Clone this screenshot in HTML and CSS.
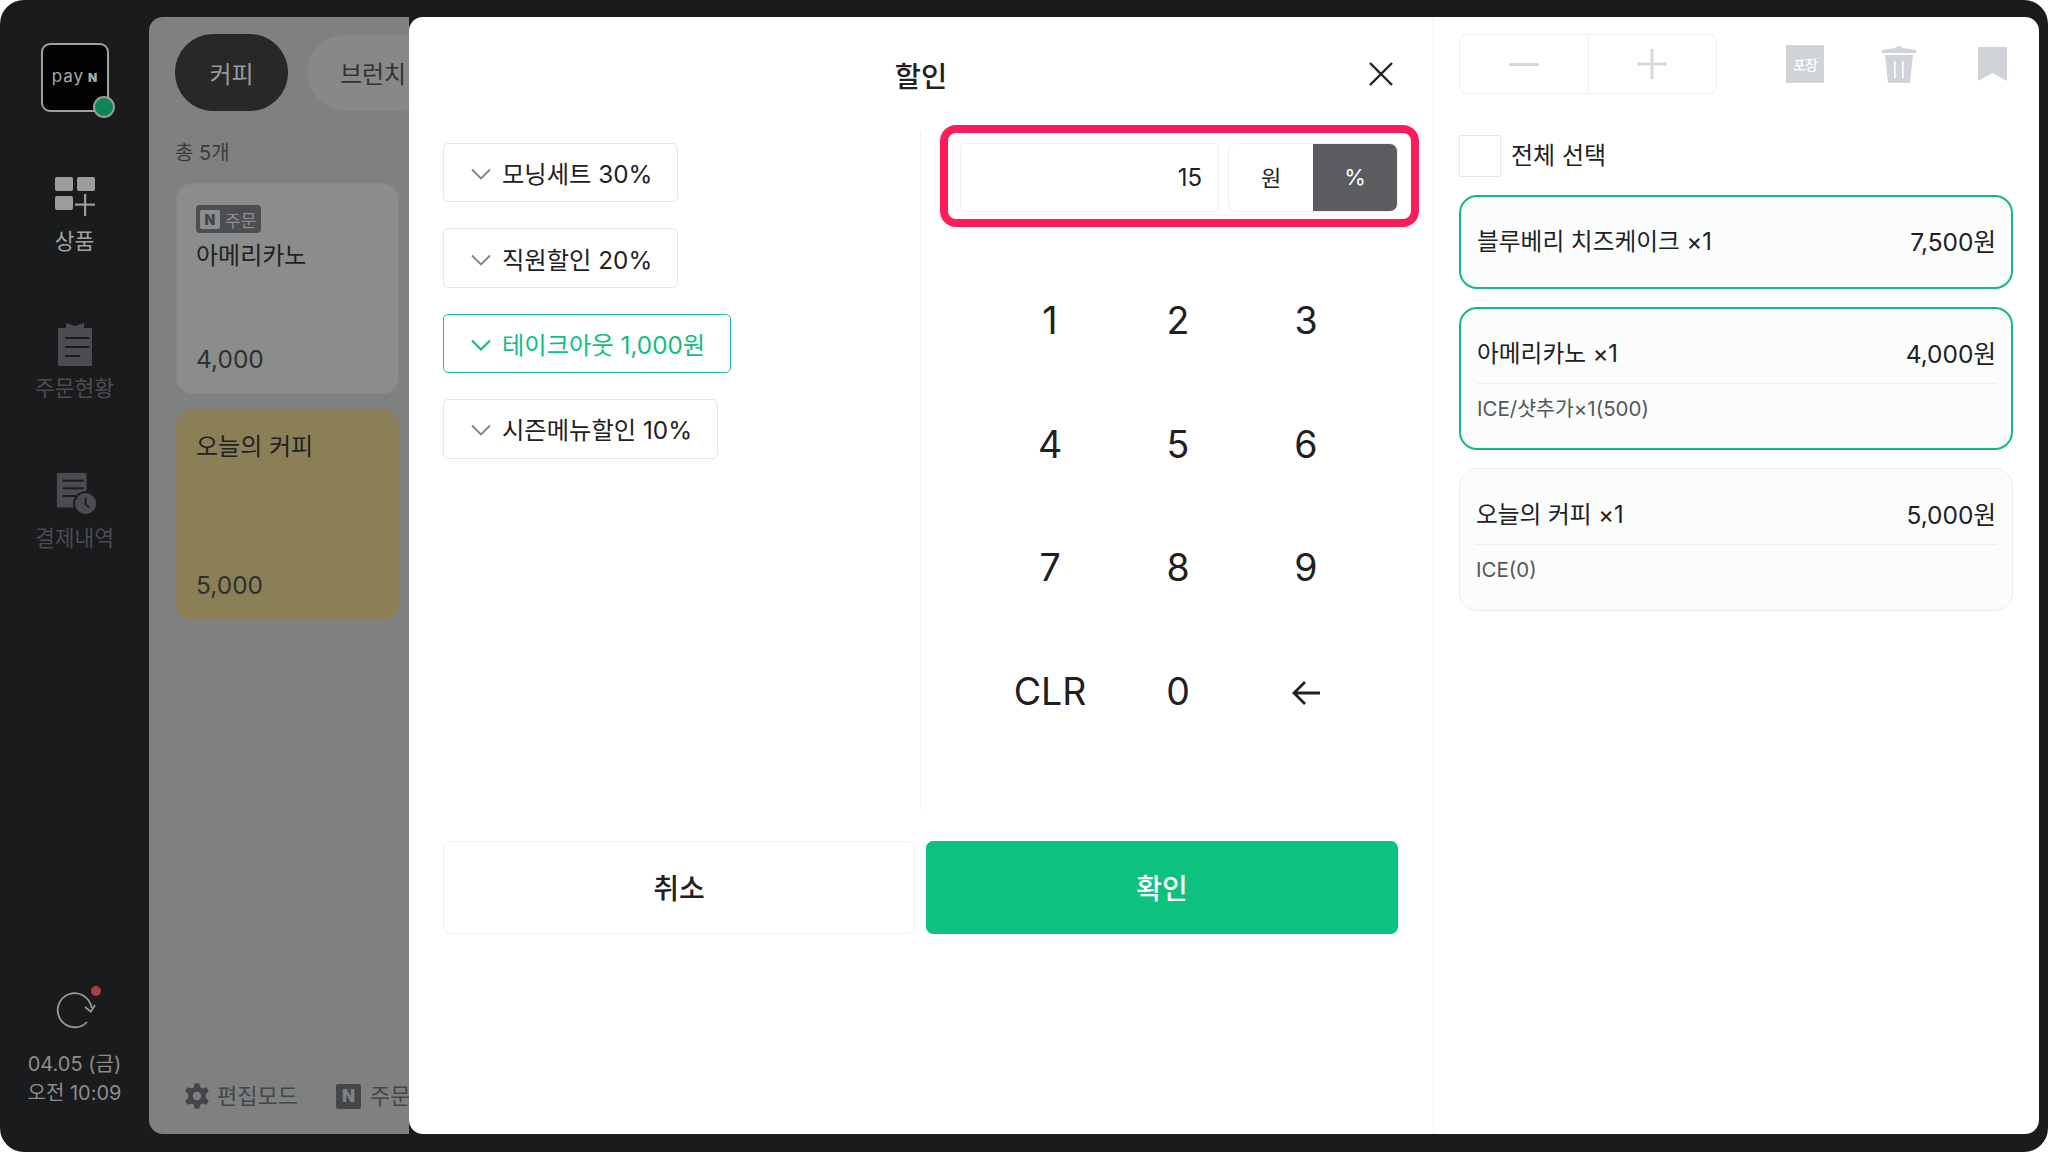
FILE: index.html
```html
<!DOCTYPE html>
<html lang="ko">

<head>
    <meta charset="UTF-8">
    <title>할인</title>
    <link rel="stylesheet" href="styles.css">
</head>

<body>
    <div class="device">

        <aside class="sidebar">
            <div class="logo">
                <span class="logo-text">pay<b>N</b></span>
                <span class="logo-dot"></span>
            </div>
            <a class="nav-item active">
                <svg width="40" height="40" viewBox="0 0 40 40" fill="#9c9c9c">
                    <rect x="0" y="0" width="18" height="14" rx="2" />
                    <rect x="22" y="0" width="18" height="14" rx="2" />
                    <rect x="0" y="19" width="18" height="14" rx="2" />
                    <rect x="29" y="17" width="2.2" height="22" />
                    <rect x="20" y="26.5" width="20" height="2.2" />
                </svg>
                <span>상품</span>
            </a>
            <a class="nav-item">
                <svg width="40" height="44" viewBox="0 0 40 44" fill="#4a4c50">
                    <path d="M11 0 L20 3 L29 0 V5 H37 V43 H3 V5 H11 Z" />
                    <g fill="#1a1b1d">
                        <rect x="10" y="14" width="24" height="2" />
                        <rect x="10" y="23" width="24" height="2" />
                        <rect x="10" y="32" width="15" height="2" />
                    </g>
                </svg>
                <span>주문현황</span>
            </a>
            <a class="nav-item">
                <svg class="history-icon" width="46" height="46" viewBox="0 0 46 46" fill="#4a4c50">
                    <path d="M2 0 H33 V36 H2 Z" />
                    <g fill="#1a1b1d">
                        <rect x="8" y="7" width="22" height="2" />
                        <rect x="8" y="15" width="22" height="2" />
                        <rect x="8" y="23" width="14" height="2" />
                    </g>
                    <circle cx="32" cy="32" r="13" fill="#1a1b1d" />
                    <circle cx="32" cy="32" r="11" />
                    <path d="M32 26 V33 L36 36" fill="none" stroke="#1a1b1d" stroke-width="1.8" />
                </svg>
                <span>결제내역</span>
            </a>
            <div class="sync">
                <svg width="44" height="44" viewBox="0 0 44 44" fill="none" stroke="#9a9a9a" stroke-width="1.8">
                    <path d="M34 34 A17 17 0 1 1 38.6 20" />
                    <path d="M32 19 L37.8 23.7 L42 17" />
                </svg>
                <span class="sync-dot"></span>
            </div>
            <div class="clock">
                <div>04.05 (금)</div>
                <div>오전 10:09</div>
            </div>
        </aside>

        <main class="products">
            <div class="tabs">
                <span class="tab current">커피</span>
                <span class="tab wide">브런치</span>
            </div>
            <div class="count">총 5개</div>
            <div class="card">
                <div>
                    <span class="badge"><i class="n-mark">N</i>주문</span>
                    <div class="card-name under-badge">아메리카노</div>
                </div>
                <div class="card-price">4,000</div>
            </div>
            <div class="card gold">
                <div class="card-name">오늘의 커피</div>
                <div class="card-price">5,000</div>
            </div>
            <div class="bottom-links">
                <span class="bottom-link">
                    <svg width="28" height="28" viewBox="0 0 24 24" fill="#44464a">
                        <path fill-rule="evenodd" d="M10 1 H14 L14.7 4.4 L16.9 5.6 L20.2 4.5 L22.2 8 L19.6 10.3 V13.7 L22.2 16 L20.2 19.5 L16.9 18.4 L14.7 19.6 L14 23 H10 L9.3 19.6 L7.1 18.4 L3.8 19.5 L1.8 16 L4.4 13.7 V10.3 L1.8 8 L3.8 4.5 L7.1 5.6 L9.3 4.4 Z M12 8.4 A3.6 3.6 0 1 0 12 15.6 A3.6 3.6 0 1 0 12 8.4 Z" />
                    </svg>
                    편집모드
                </span>
                <span class="bottom-link"><i class="n-square">N</i>주문</span>
            </div>
        </main>

        <section class="modal">
            <header class="modal-head">
                <span></span>
                <h2>할인</h2>
                <svg class="close" width="26" height="26" viewBox="0 0 26 26" fill="none" stroke="#1f2022" stroke-width="2.4">
                    <path d="M2 2 L24 24 M24 2 L2 24" />
                </svg>
            </header>

            <div class="modal-body">
                <div class="options">
                    <button class="option">
                        <svg width="20" height="12" viewBox="0 0 20 12" fill="none" stroke="#808285" stroke-width="1.8"><path d="M1 1.5 L10 10.5 L19 1.5" /></svg>
                        모닝세트 30%
                    </button>
                    <button class="option">
                        <svg width="20" height="12" viewBox="0 0 20 12" fill="none" stroke="#808285" stroke-width="1.8"><path d="M1 1.5 L10 10.5 L19 1.5" /></svg>
                        직원할인 20%
                    </button>
                    <button class="option selected">
                        <svg width="20" height="12" viewBox="0 0 20 12" fill="none" stroke="#12bd82" stroke-width="2.2"><path d="M1 1.5 L10 10.5 L19 1.5" /></svg>
                        테이크아웃 1,000원
                    </button>
                    <button class="option">
                        <svg width="20" height="12" viewBox="0 0 20 12" fill="none" stroke="#808285" stroke-width="1.8"><path d="M1 1.5 L10 10.5 L19 1.5" /></svg>
                        시즌메뉴할인 10%
                    </button>
                </div>

                <div class="pad">
                    <div class="entry-box">
                        <div class="entry-value">15</div>
                        <div class="unit-toggle">
                            <span class="unit">원</span>
                            <span class="unit on">%</span>
                        </div>
                    </div>
                    <div class="keys">
                        <span class="key">1</span>
                        <span class="key">2</span>
                        <span class="key">3</span>
                        <span class="key">4</span>
                        <span class="key">5</span>
                        <span class="key">6</span>
                        <span class="key">7</span>
                        <span class="key">8</span>
                        <span class="key">9</span>
                        <span class="key">CLR</span>
                        <span class="key">0</span>
                        <span class="key">
                            <svg class="back" width="30" height="26" viewBox="0 0 30 26" fill="none" stroke="#1f2022" stroke-width="2.8"><path d="M29 13 H3 M14 2 L3 13 L14 24" /></svg>
                        </span>
                    </div>
                </div>
            </div>

            <footer class="modal-foot">
                <button class="btn">취소</button>
                <button class="btn primary">확인</button>
            </footer>
        </section>

        <section class="cart">
            <div class="toolbar">
                <div class="stepper">
                    <span class="step">
                        <svg width="30" height="3" viewBox="0 0 30 3"><rect width="30" height="3" fill="#d6d9dc" /></svg>
                    </span>
                    <span class="step">
                        <svg width="30" height="30" viewBox="0 0 30 30" fill="#d6d9dc"><rect y="13.5" width="30" height="3" /><rect x="13.5" width="3" height="30" /></svg>
                    </span>
                </div>
                <span class="wrap-icon">포장</span>
                <svg class="trash" width="36" height="38" viewBox="0 0 36 38" fill="#d0d3d7">
                    <path d="M14 3 Q18 -1 22 3 L35 5 V8 H1 V5 Z" />
                    <path d="M4 10 H32 L29 38 H7 Z" />
                    <rect x="13" y="16" width="1.6" height="17" fill="#fff" />
                    <rect x="21" y="16" width="1.6" height="17" fill="#fff" />
                </svg>
                <svg class="bookmark" width="29" height="34" viewBox="0 0 29 34" fill="#d0d3d7">
                    <path d="M0 0 H29 V34 L14.5 26 L0 34 Z" />
                </svg>
            </div>

            <label class="select-all">
                <span class="checkbox"></span>
                전체 선택
            </label>

            <div class="items">
                <div class="item active">
                    <div class="item-row"><span>블루베리 치즈케이크 ×1</span><span class="item-price">7,500원</span></div>
                </div>
                <div class="item active">
                    <div class="item-row"><span>아메리카노 ×1</span><span class="item-price">4,000원</span></div>
                    <div class="item-extra">ICE/샷추가×1(500)</div>
                </div>
                <div class="item">
                    <div class="item-row"><span>오늘의 커피 ×1</span><span class="item-price">5,000원</span></div>
                    <div class="item-extra">ICE(0)</div>
                </div>
            </div>
        </section>

    </div>
</body>

</html>
```

FILE: styles.css
```css
* {
    box-sizing: border-box;
}

body {
    margin: 0;
    background: #fff;
    font-family: Inter, "Noto Sans CJK KR", sans-serif;
    color: #1f2022;
}

button {
    font-family: inherit;
    color: inherit;
    cursor: pointer;
}

.device {
    display: flex;
    width: 2048px;
    height: 1152px;
    padding: 17px 9px 18px 0;
    background: #1a1b1d;
    border-radius: 24px;
    overflow: hidden;
}

/* sidebar */
.sidebar {
    flex: 0 0 149px;
    display: flex;
    flex-direction: column;
    align-items: center;
    padding-top: 26px;
}

.logo {
    position: relative;
    flex: none;
    width: 68px;
    height: 69px;
    display: flex;
    align-items: center;
    justify-content: center;
    margin: 0 0 65px 1px;
    background: #030303;
    border: 2px solid #a0a0a0;
    border-radius: 9px;
}

.logo-text {
    padding-bottom: 3px;
    color: #a8a8a8;
    font-size: 17px;
    letter-spacing: 1px;
}

.logo-text b {
    margin-left: 4px;
    font-size: 12px;
    font-weight: 900;
}

.logo-dot {
    position: absolute;
    right: -8px;
    bottom: -8px;
    width: 22px;
    height: 22px;
    background: #0d8656;
    border: 2px solid #9a9a9a;
    border-radius: 50%;
}

.nav-item {
    display: flex;
    flex-direction: column;
    align-items: center;
    height: 150px;
    gap: 7px;
    color: #4a4c50;
    font-size: 21.5px;
    line-height: 28px;
}

.nav-item.active {
    height: 146px;
    gap: 10px;
    color: #a3a3a3;
}

.history-icon {
    height: 44px;
    margin-left: 5px;
}

.sync {
    position: relative;
    margin-top: auto;
    margin-bottom: 18px;
    height: 44px;
}

.sync-dot {
    position: absolute;
    top: -2px;
    right: -4px;
    width: 10px;
    height: 10px;
    background: #b33a42;
    border-radius: 50%;
}

.clock {
    margin-bottom: 26px;
    color: #8c8c8c;
    font-size: 20px;
    line-height: 29px;
    text-align: center;
    white-space: nowrap;
}

/* product list, dimmed behind the modal */
.products {
    position: relative;
    flex: 0 0 260px;
    padding: 17px 0 0 26px;
    background: #7f8181;
    border-radius: 14px 0 0 14px;
    overflow: hidden;
}

.tabs {
    display: flex;
    gap: 19px;
    width: 400px;
}

.tab {
    flex: none;
    display: flex;
    align-items: center;
    justify-content: center;
    width: 113px;
    height: 77px;
    border: 1px solid #838585;
    border-radius: 38px;
    background: #878888;
    color: #333;
    font-size: 24px;
}

.tab.wide {
    width: 132px;
}

.tab.current {
    background: #26282a;
    border-color: #26282a;
    color: #9a9a9a;
}

.count {
    margin: 29px 0 17px;
    color: #3a3b3d;
    font-size: 20px;
    line-height: 26px;
}

.card {
    display: flex;
    flex-direction: column;
    justify-content: space-between;
    width: 223px;
    height: 211px;
    margin: 0 0 15px 1px;
    padding: 21px 19px 19px;
    background: #8b8c8c;
    border: 1px solid #868888;
    border-radius: 16px;
}

.card.gold {
    background: #8b7f58;
    border-color: #8b7f58;
    padding-top: 22px;
}

.card-name {
    color: #222;
    font-size: 24px;
    line-height: 30px;
}

.under-badge {
    margin-top: 8px;
}

.card-price {
    color: #2f3032;
    font-size: 24.5px;
    line-height: 30px;
}

.badge {
    display: flex;
    align-items: center;
    gap: 5px;
    width: 65px;
    height: 28px;
    padding: 0 4px;
    background: #4c4e52;
    border-radius: 4px;
    color: #8d8e90;
    font-size: 17px;
}

.n-mark {
    display: flex;
    align-items: center;
    justify-content: center;
    width: 20px;
    height: 19px;
    background: #8d8e90;
    border-radius: 2px;
    color: #44464a;
    font-size: 14px;
    font-style: normal;
    font-weight: 900;
}

.bottom-links {
    position: absolute;
    left: 34px;
    bottom: 24px;
    display: flex;
    gap: 38px;
    width: 400px;
}

.bottom-link {
    display: flex;
    align-items: center;
    gap: 6px;
    color: #44464a;
    font-size: 22px;
    line-height: 28px;
    white-space: nowrap;
}

.n-square {
    display: flex;
    align-items: center;
    justify-content: center;
    width: 25px;
    height: 25px;
    margin-right: 3px;
    background: #44464a;
    border-radius: 2px;
    color: #7f8181;
    font-size: 17px;
    font-style: normal;
    font-weight: 900;
}

/* discount modal */
.modal {
    flex: 0 0 1025px;
    display: flex;
    flex-direction: column;
    background: #fff;
    border-right: 1px solid #f1f2f3;
    border-radius: 14px 0 0 14px;
}

.modal-head {
    display: grid;
    grid-template-columns: 1fr auto 1fr;
    align-items: center;
    height: 114px;
    padding: 0 39px;
}

.modal-head h2 {
    margin: 0;
    font-size: 28.5px;
    font-weight: 500;
}

.close {
    justify-self: end;
}

.modal-body {
    display: flex;
    height: 679px;
}

.options {
    flex: 0 0 512px;
    display: flex;
    flex-direction: column;
    align-items: flex-start;
    gap: 26px;
    padding: 12px 0 0 34px;
    border-right: 1px solid #f1f2f3;
}

.option {
    display: flex;
    align-items: center;
    gap: 11px;
    height: 59.4px;
    padding: 0 25px 0 27px;
    background: #fff;
    border: 1.5px solid #e6e7e9;
    border-radius: 5px;
    font-size: 24.3px;
    white-space: nowrap;
}

.option svg {
    margin-top: 3px;
}

.option.selected {
    border-color: #26bd8c;
    color: #12bd82;
}

.pad {
    flex: 1;
}

.entry-box {
    display: flex;
    gap: 9px;
    width: 479px;
    height: 102px;
    margin: -6px 0 0 19px;
    padding: 10px 13px 7px 12px;
    border: 8px solid #fb1c5a;
    border-radius: 16px;
}

.entry-value {
    flex: 0 0 259px;
    display: flex;
    align-items: center;
    justify-content: flex-end;
    padding-right: 16px;
    border: 1.5px solid #eeeff0;
    border-radius: 4px;
    font-size: 24px;
}

.unit-toggle {
    flex: 1;
    display: flex;
    border: 1.5px solid #eeeff0;
    border-radius: 8px;
    overflow: hidden;
}

.unit {
    flex: 1;
    display: flex;
    align-items: center;
    justify-content: center;
    padding-bottom: 3px;
    font-size: 22px;
}

.unit.on {
    padding-bottom: 1px;
    background: #5a5c60;
    color: #fff;
}

.keys {
    display: grid;
    grid-template-columns: repeat(3, 128px);
    grid-auto-rows: 123.6px;
    margin: 32px 0 0 65px;
}

.key {
    display: flex;
    align-items: center;
    justify-content: center;
    font-size: 37.5px;
}

.back {
    margin-top: 2px;
}

.modal-foot {
    display: flex;
    gap: 11px;
    padding: 31px 35px 0 34px;
}

.btn {
    flex: 1;
    height: 93px;
    padding-bottom: 3px;
    background: #fff;
    border: 1.5px solid #f0f1f2;
    border-radius: 7px;
    font-size: 28px;
    font-weight: 500;
}

.btn.primary {
    background: #0cc27e;
    border-color: #0cc27e;
    color: #fff;
}

/* cart */
.cart {
    flex: 1;
    padding: 17px 26px 0 25px;
    background: #fff;
    border-radius: 0 14px 14px 0;
}

.toolbar {
    display: flex;
    align-items: center;
    height: 60px;
}

.stepper {
    display: flex;
    width: 258px;
    height: 60px;
    margin-right: 69px;
    border: 1.5px solid #eff0f1;
    border-radius: 7px;
}

.step {
    flex: 1;
    display: flex;
    align-items: center;
    justify-content: center;
}

.step + .step {
    border-left: 1.5px solid #eff0f1;
}

.wrap-icon {
    display: flex;
    align-items: center;
    justify-content: center;
    width: 38px;
    height: 38px;
    margin-right: 57px;
    background: #d0d3d7;
    color: #fff;
    font-size: 14px;
    font-weight: 500;
    letter-spacing: -1px;
}

.trash {
    margin-right: 61px;
}

.select-all {
    display: flex;
    align-items: center;
    gap: 10px;
    margin-top: 40px;
    font-size: 24px;
    line-height: 44px;
}

.checkbox {
    width: 42px;
    height: 42px;
    border: 1.5px solid #e9eaec;
    border-radius: 2px;
}

.items {
    display: flex;
    flex-direction: column;
    gap: 18px;
    margin-top: 17px;
}

.item {
    padding: 31px 16px 31px;
    background: #fbfdfd;
    border: 1.5px solid #e8eaec;
    border-radius: 18px;
}

.item.active {
    padding: 30px 15px 30px 16px;
    border: 2.5px solid #17b885;
}

.item-row {
    display: flex;
    justify-content: space-between;
    font-size: 23.7px;
    line-height: 30px;
}

.item-price {
    font-size: 24.5px;
}

.item-extra {
    margin: 14px 0 -6px;
    padding: 10px 0 0;
    border-top: 1.5px solid #eceef0;
    color: #55575a;
    font-size: 20.5px;
    line-height: 30px;
}
```
